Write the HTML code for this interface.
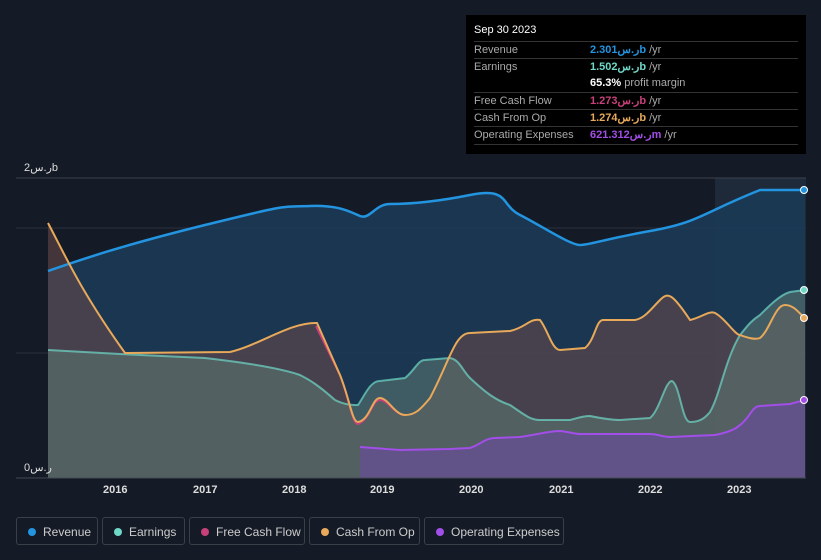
<!DOCTYPE html>
<html><head><meta charset="utf-8"><style>
body{margin:0;background:#151b26;width:821px;height:560px;overflow:hidden;font-family:"Liberation Sans","Noto Sans CJK SC",sans-serif;position:relative}
.tt{position:absolute;left:466px;top:15px;width:340px;height:139px;background:#000;color:#fff;font-size:11px}
.tt .h{position:absolute;left:8px;top:9px;font-size:11px}
.r{position:absolute;left:8px;width:324px;height:17px;border-top:1px solid #333;line-height:17px;color:#aaa}
.r b{position:absolute;left:116px;font-weight:bold}
.r span{color:#aaa;font-weight:normal}
.leg{position:absolute;top:517px;height:28px;border:1px solid #3a3f48;border-radius:3px;color:#ccc;font-size:12px;line-height:28px;box-sizing:border-box;padding-left:26px}
.leg i{position:absolute;left:11px;top:10px;width:8px;height:8px;border-radius:50%}
.ax{position:absolute;top:484px;color:#ddd;font-size:11px;font-weight:bold}
</style></head><body>
<svg width="821" height="560" style="position:absolute;left:0;top:0">
<rect x="715" y="178" width="91" height="300" fill="#1e2a3a"/>
<line x1="16" y1="178" x2="806" y2="178" stroke="#3c424c"/>
<line x1="16" y1="228" x2="806" y2="228" stroke="#2c323c"/>
<line x1="16" y1="353" x2="806" y2="353" stroke="#2c323c"/>
<path d="M48,271 C80,260 120,246 205,225 S280,207 310,206 S350,212 360,216 S375,204 390,204 S430,203 470,195 S500,205 520,215 S570,245 580,245 S600,240 650,231 S700,214 760,190 L805,190 L805,478 L48,478Z" fill="#1b3b58" opacity="0.85"/>
<path d="M48,223 C65,255 80,290 125,353 L230,352 C260,345 290,322 317,323 L340,375 C350,400 352,422 358,422 C370,420 372,398 380,398 S395,415 405,415 S420,410 430,398 C450,360 455,333 470,333 L510,331 C525,328 530,318 540,320 C548,330 552,350 560,350 L585,348 C595,340 596,320 603,320 L635,320 C645,318 650,310 660,300 C668,292 672,293 690,320 C700,318 710,310 715,313 C725,318 735,335 740,335 C748,338 755,340 760,338 C770,330 775,305 785,305 S800,315 805,318 L805,478 L48,478Z" fill="#6b4a4a" opacity="0.55"/>
<path d="M48,350 L120,354 L205,358 C240,362 280,368 300,375 C310,380 318,385 335,400 C345,405 352,405 358,405 C365,395 370,381 380,381 L405,378 C415,370 418,360 425,360 L450,358 C460,360 462,370 470,378 C485,392 495,400 510,405 C525,415 530,420 540,420 L570,420 C578,418 582,416 590,416 C600,418 610,420 620,420 L650,418 C660,410 665,381 672,381 C680,385 682,422 690,422 C700,422 705,418 710,412 C720,395 725,360 740,335 C748,325 752,320 760,315 C770,305 780,295 790,292 L805,290 L805,478 L48,478Z" fill="#5e7a72" opacity="0.55"/>
<path d="M360,447 L400,450 L450,449 L470,448 C480,445 485,438 495,438 L520,437 C540,434 550,431 560,431 C570,432 575,434 580,434 L650,434 C658,434 662,437 670,437 L715,435 C725,433 735,430 740,425 C750,418 752,406 760,406 L790,404 L805,400 L805,478 L360,478Z" fill="#6a4aa0" opacity="0.6"/>
<path d="M48,271 C80,260 120,246 205,225 S280,207 310,206 S350,212 360,216 S375,204 390,204 S430,203 470,195 S500,205 520,215 S570,245 580,245 S600,240 650,231 S700,214 760,190 L805,190" fill="none" stroke="#2394e0" stroke-width="2.5"/>
<path d="M48,350 L120,354 L205,358 C240,362 280,368 300,375 C310,380 318,385 335,400 C345,405 352,405 358,405 C365,395 370,381 380,381 L405,378 C415,370 418,360 425,360 L450,358 C460,360 462,370 470,378 C485,392 495,400 510,405 C525,415 530,420 540,420 L570,420 C578,418 582,416 590,416 C600,418 610,420 620,420 L650,418 C660,410 665,381 672,381 C680,385 682,422 690,422 C700,422 705,418 710,412 C720,395 725,360 740,335 C748,325 752,320 760,315 C770,305 780,295 790,292 L805,290" fill="none" stroke="#6fd8c8" stroke-width="2" opacity="0.7"/>
<path d="M316,326 L340,375 C350,400 352,424 358,424 C370,420 372,400 380,400 S395,415 405,415" fill="none" stroke="#c8407a" stroke-width="2"/>
<path d="M48,223 C65,255 80,290 125,353 L230,352 C260,345 290,322 317,323 L340,375 C350,400 352,422 358,422 C370,420 372,398 380,398 S395,415 405,415 S420,410 430,398 C450,360 455,333 470,333 L510,331 C525,328 530,318 540,320 C548,330 552,350 560,350 L585,348 C595,340 596,320 603,320 L635,320 C645,318 650,310 660,300 C668,292 672,293 690,320 C700,318 710,310 715,313 C725,318 735,335 740,335 C748,338 755,340 760,338 C770,330 775,305 785,305 S800,315 805,318" fill="none" stroke="#e8a95a" stroke-width="2"/>
<path d="M360,447 L400,450 L450,449 L470,448 C480,445 485,438 495,438 L520,437 C540,434 550,431 560,431 C570,432 575,434 580,434 L650,434 C658,434 662,437 670,437 L715,435 C725,433 735,430 740,425 C750,418 752,406 760,406 L790,404 L805,400" fill="none" stroke="#a24ee8" stroke-width="2"/>
<line x1="16" y1="478" x2="806" y2="478" stroke="#444a54"/>
<circle cx="804" cy="190" r="3.5" fill="#2394e0" stroke="#fff" stroke-width="1"/>
<circle cx="804" cy="290" r="3.5" fill="#6fd8c8" stroke="#fff" stroke-width="1"/>
<circle cx="804" cy="318" r="3.5" fill="#e8a95a" stroke="#fff" stroke-width="1"/>
<circle cx="804" cy="400" r="3.5" fill="#a24ee8" stroke="#fff" stroke-width="1"/>
<text x="24" y="171" fill="#ddd" font-size="11" font-family="Liberation Sans,sans-serif">2ر.سb</text>
<text x="24" y="471" fill="#ddd" font-size="11" font-family="Liberation Sans,sans-serif">0ر.س</text>
</svg>
<div class="ax" style="left:103px">2016</div><div class="ax" style="left:193px">2017</div><div class="ax" style="left:282px">2018</div><div class="ax" style="left:370px">2019</div><div class="ax" style="left:459px">2020</div><div class="ax" style="left:549px">2021</div><div class="ax" style="left:638px">2022</div><div class="ax" style="left:727px">2023</div>
<div class="tt"><div class="h">Sep 30 2023</div>
<div class="r" style="top:26px">Revenue<b style="color:#2394e0">2.301ر.سb <span>/yr</span></b></div>
<div class="r" style="top:43px">Earnings<b style="color:#6fd8c8">1.502ر.سb <span>/yr</span></b></div>
<div class="r" style="top:60px;border-top:none"><b style="color:#fff">65.3% <span>profit margin</span></b></div>
<div class="r" style="top:77px">Free Cash Flow<b style="color:#c8407a">1.273ر.سb <span>/yr</span></b></div>
<div class="r" style="top:94px">Cash From Op<b style="color:#e8a95a">1.274ر.سb <span>/yr</span></b></div>
<div class="r" style="top:111px">Operating Expenses<b style="color:#a24ee8">621.312ر.سm <span>/yr</span></b></div>
<div class="r" style="top:129px;height:0"></div>
</div>
<div class="leg" style="left:16px;width:82px"><i style="background:#2394e0"></i>Revenue</div>
<div class="leg" style="left:102px;width:83px"><i style="background:#6fd8c8"></i>Earnings</div>
<div class="leg" style="left:189px;width:116px"><i style="background:#c8407a"></i>Free Cash Flow</div>
<div class="leg" style="left:309px;width:111px"><i style="background:#e8a95a"></i>Cash From Op</div>
<div class="leg" style="left:424px;width:140px"><i style="background:#a24ee8"></i>Operating Expenses</div>
</body></html>
